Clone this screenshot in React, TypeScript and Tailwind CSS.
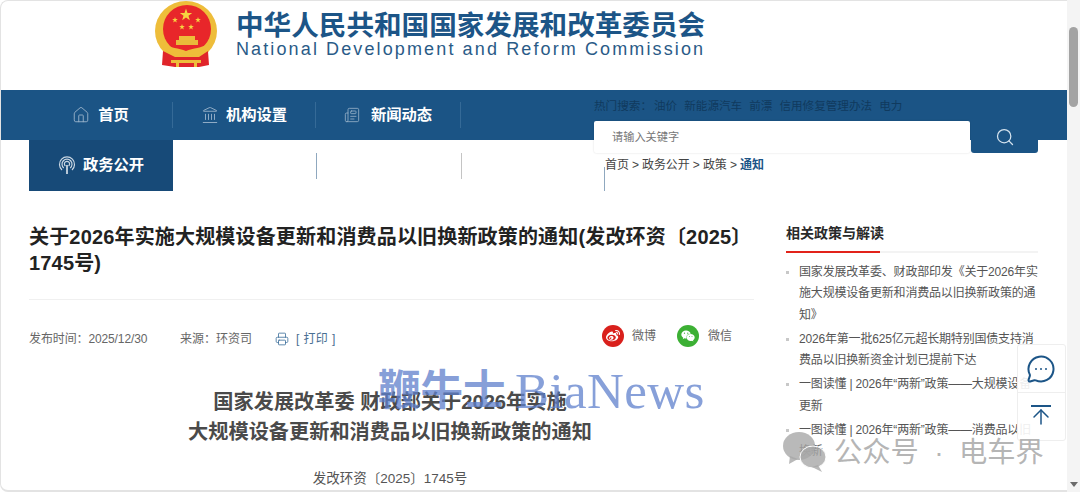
import { Home, Landmark, Newspaper, Search, Printer, MessageCircleMore, ArrowUp } from "lucide-react";
import { FaWeibo, FaWeixin } from "react-icons/fa";

const cjk = "font-['Liberation_Sans','Noto_Sans_CJK_SC',sans-serif]";

const related = [
  ["国家发展改革委、财政部印发《关于2026年实", "施大规模设备更新和消费品以旧换新政策的通", "知》"],
  ["2026年第一批625亿元超长期特别国债支持消", "费品以旧换新资金计划已提前下达"],
  ["一图读懂 | 2026年“两新”政策——大规模设备", "更新"],
  ["一图读懂 | 2026年“两新”政策——消费品以旧", "换新"],
];

const hotWords = ["热门搜索：", "油价", "新能源汽车", "前漂", "信用修复管理办法", "电力"];

function star(cx: number, cy: number, r: number) {
  const pts: string[] = [];
  for (let i = 0; i < 10; i++) {
    const rad = i % 2 === 0 ? r : r * 0.4;
    const a = (Math.PI / 5) * i - Math.PI / 2;
    pts.push(`${cx + rad * Math.cos(a)},${cy + rad * Math.sin(a)}`);
  }
  return <polygon key={`${cx}-${cy}`} points={pts.join(" ")} fill="#f6d340" />;
}

function Emblem() {
  return (
    <svg width="64" height="68" viewBox="0 0 64 68">
      <ellipse cx="31" cy="30" rx="31" ry="30" fill="#eebd3a" />
      <ellipse cx="32" cy="28" rx="24" ry="24" fill="#e8262a" />
      {star(31, 14, 6.5)}
      {star(20, 19, 3)}
      {star(43, 19, 3)}
      {star(27, 26, 3)}
      {star(36, 26, 3)}
      <rect x="24" y="35" width="16" height="4" fill="#eebd3a" />
      <rect x="21" y="39" width="22" height="5" fill="#e9b93a" />
      <path d="M9 43 C15 47 24 47 31 50 C38 47 47 47 53 43 L54 50 C47 53 40 52 31 55 C22 52 15 53 8 50 Z" fill="#eebd3a" />
      <path d="M8 50 L20 56 L44 56 L53 50 L54 64 L44 66 L20 66 L7 64 Z" fill="#e0242a" />
      <path d="M16 59 H46 V62 H42 V66 H39 V62 H24 V66 H21 V62 H16 Z" fill="#eebd3a" />
    </svg>
  );
}

function Antenna() {
  return (
    <svg width="18" height="20" viewBox="0 0 18 20" fill="none" stroke="#c9d6e2" strokeWidth="1.2">
      <path d="M4 14 A7.5 7.5 0 1 1 14 14" />
      <path d="M5.8 12 A5 5 0 1 1 12.2 12" />
      <path d="M7.4 10 A2.6 2.6 0 1 1 10.6 10" />
      <path d="M9 9 V18" strokeWidth="1.8" />
    </svg>
  );
}

export default function App() {
  return (
    <div className={`relative flex h-[492px] w-full overflow-hidden bg-white ${cjk}`}>
      <div className="min-w-0 flex-1 overflow-hidden rounded-l-[8px] border-b-2 border-l border-t border-[#e3e3e3]">
        {/* Header */}
        <header className="flex h-[89px] pl-[154px]">
          <Emblem />
          <div className="ml-[17px] pt-[10px]">
            <div className="text-[27.6px] font-bold leading-[29px] text-[#1c5587]">中华人民共和国国家发展和改革委员会</div>
            <div className="-mt-[1px] text-[18px] leading-[20px] tracking-[2.12px] text-[#2a5b87]">National Development and Reform Commission</div>
          </div>
        </header>

        {/* Nav */}
        <nav className="flex h-[50px] items-center bg-[#1b5485] pl-[28px] text-white">
          <div className="flex h-[26px] w-[144px] items-center justify-center gap-[8px] border-r border-[#356a97] text-[15.3px] font-bold">
            <Home size={18} strokeWidth={1.2} className="text-[#9db6cc]" />
            首页
          </div>
          <div className="flex h-[26px] w-[143px] items-center justify-center gap-[7px] border-r border-[#356a97] text-[15.3px] font-bold">
            <Landmark size={18} strokeWidth={1.2} className="text-[#9db6cc]" />
            机构设置
          </div>
          <div className="flex h-[26px] w-[145px] items-center justify-center gap-[11px] border-r border-[#356a97] text-[15.3px] font-bold">
            <Newspaper size={16} strokeWidth={1.2} className="text-[#9db6cc]" />
            新闻动态
          </div>
        </nav>
        <div className="flex h-[51px] items-center pl-[28px]">
          <div className="flex h-full w-[144px] items-center justify-center gap-[7px] bg-[#174a78] text-[15.3px] font-bold text-white">
            <Antenna />
            政务公开
          </div>
          <div className="h-[26px] w-[144px] border-r border-[#8fa8bf]" />
          <div className="h-[26px] w-[145px] border-r border-[#c4c4c4]" />
          <div className="h-[24px] w-[143px] self-end border-r border-[#8fa8bf]" />
        </div>

        {/* Content */}
        <div className="flex pl-[28px] pt-[33px]">
          <main className="w-[725px]">
            <h1 className="h-[76px] border-b border-[#f0f0f0] text-[20px] font-bold leading-[26px] tracking-[0.17px] text-[#222]">
              关于2026年实施大规模设备更新和消费品以旧换新政策的通知(发改环资〔2025〕1745号)
            </h1>
            <div className="mt-[22px] flex h-[34px] items-center pr-[22px] text-[12px] text-[#666]">
              <span className="w-[151px] tracking-[-0.12px]">发布时间：2025/12/30</span>
              <span className="w-[95px]">来源：环资司</span>
              <Printer size={14} strokeWidth={1.4} className="text-[#3d6f9c]" />
              <span className="ml-[7px] tracking-[0.4px] text-[#4a6f93]">[ 打印 ]</span>
              <div className="ml-auto flex -translate-y-[3px] items-center">
                <span className="flex h-[22px] w-[22px] items-center justify-center rounded-full bg-[#d9201c]">
                  <FaWeibo size={14} className="text-white" />
                </span>
                <span className="ml-[8px] w-[45px]">微博</span>
                <span className="flex h-[22px] w-[22px] items-center justify-center rounded-full bg-[#3cb034]">
                  <FaWeixin size={14} className="text-white" />
                </span>
                <span className="ml-[9px]">微信</span>
              </div>
            </div>
            <div className="mt-[31px] w-[722px] text-center text-[20.2px] font-bold leading-[30px] text-[#4a4a4a]">
              <div>国家发展改革委 财政部关于2026年实施</div>
              <div>大规模设备更新和消费品以旧换新政策的通知</div>
            </div>
            <div className="mt-[22px] w-[722px] text-center text-[13.5px] text-[#555]">发改环资〔2025〕1745号</div>
          </main>

          <aside className="ml-[32px] w-[252px] shrink-0">
            <div className="-mt-[1px] border-b-2 border-[#f3f3f3] pb-[8px]">
              <div className="relative text-[14px] font-bold leading-[20px] text-[#2a2a2a]">
                相关政策与解读
                <span className="absolute -bottom-[10px] left-0 h-[2px] w-[94px] bg-[#e2231a]" />
              </div>
            </div>
            <ul className="mt-[9px] text-[12px] leading-[21.3px] tracking-[-0.18px] text-[#555]">
              {related.map((lines) => (
                <li key={lines[0]} className="relative mb-[3px] pl-[13px]">
                  <span className="absolute left-0 top-[9px] h-[3px] w-[3px] bg-[#c8c8c8]" />
                  {lines.map((l) => (
                    <div key={l} className="whitespace-nowrap">{l}</div>
                  ))}
                </li>
              ))}
            </ul>
          </aside>
        </div>
      </div>

      {/* Scrollbar */}
      <div className="relative w-[13px] shrink-0 bg-[#f4f4f4]">
        <div className="absolute left-[2px] top-[27px] h-[80px] w-[9px] rounded-[5px] bg-[#a3a3a3]" />
        <div className="absolute bottom-[5px] left-[3px] h-0 w-0 border-x-[4px] border-t-[5px] border-x-transparent border-t-[#6b6b6b]" />
      </div>

      {/* Search */}
      <div className="absolute left-[594px] top-[99px] w-[444px]">
        <div className="flex gap-[7px] whitespace-nowrap text-[11.6px] leading-[14px] text-[#103a5e]">
          {hotWords.map((w) => (
            <span key={w} className="first:-mr-[5px]">{w}</span>
          ))}
        </div>
        <div className="mt-[8px] flex h-[32px] items-end">
          <div className="flex h-[32px] w-[376px] items-center rounded-[2px] bg-white pl-[18px] text-[11.2px] text-[#777] shadow-[0_0_2px_rgba(0,0,0,0.15)]">请输入关键字</div>
          <div className="ml-[1px] flex h-[32px] w-[67px] items-center justify-center rounded-b-[3px] bg-[#1b5485]">
            <Search size={20} strokeWidth={1.5} className="text-[#d5e3ee]" />
          </div>
        </div>
        <div className="ml-[11px] mt-[4px] text-[12px] leading-[16px] tracking-[-0.12px] text-[#444]">
          首页 &gt; 政务公开 &gt; 政策 &gt; <span className="font-bold text-[#1c5587]">通知</span>
        </div>
      </div>

      {/* Float tools */}
      <div className="absolute left-[1017px] top-[344px] w-[49px] rounded-[3px] border border-[#eeeeee] bg-white/90">
        <div className="flex h-[48px] items-center justify-center border-b border-[#eeeeee]">
          <MessageCircleMore size={30} strokeWidth={1.6} className="-translate-x-[1px] text-[#1c5587]" />
        </div>
        <div className="flex h-[47px] -translate-x-[1px] flex-col items-center justify-center">
          <div className="h-[2px] w-[20px] bg-[#1c5587]" />
          <ArrowUp size={24} strokeWidth={1.5} className="-mt-[2px] text-[#1c5587]" />
        </div>
      </div>

      {/* Watermarks */}
      <div className="pointer-events-none absolute left-[378px] top-[361px] flex items-center whitespace-nowrap font-['Liberation_Serif','Noto_Sans_CJK_SC',serif] leading-[60px] text-[#5f80cc]/75">
        <span className="w-[137px] text-[42.5px] font-bold">鞭牛士</span>
        <span className="text-[51px] tracking-[0.4px]">BiaNews</span>
      </div>
      <div className="pointer-events-none absolute left-[783px] top-[431px] flex items-center text-[#a8a8a8]/85">
        <svg width="43" height="42" viewBox="0 0 43 42" fill="#a8a8a8" fillOpacity="0.8">
          <ellipse cx="16" cy="15" rx="16" ry="14" />
          <path d="M7 25 L6 33 L15 28 Z" />
          <ellipse cx="30" cy="26" rx="13" ry="11" stroke="#fff" strokeWidth="1" />
          <path d="M35 34 L39 41 L29 36 Z" />
        </svg>
        <span className="ml-[8px] flex text-[28.3px] leading-[38px]">
          <span>公众号</span>
          <span className="w-[40px] text-center">·</span>
          <span>电车界</span>
        </span>
      </div>
    </div>
  );
}
